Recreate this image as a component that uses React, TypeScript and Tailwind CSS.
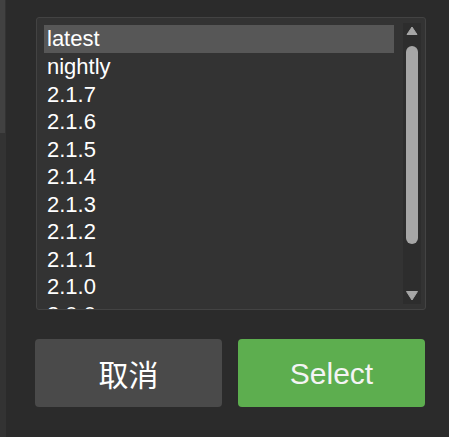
import React from "react";

const versions = [
  "latest",
  "nightly",
  "2.1.7",
  "2.1.6",
  "2.1.5",
  "2.1.4",
  "2.1.3",
  "2.1.2",
  "2.1.1",
  "2.1.0",
  "2.0.0",
];

export default function App() {
  const selected = "latest";

  return (
    <div
      className="w-[449px] h-[437px] bg-[#2b2b2b] flex text-white"
      style={{ fontFamily: '"Liberation Sans", Arial, "Noto Sans CJK SC", sans-serif' }}
    >
      {/* edge of the neighbouring panel */}
      <div className="w-[6px] flex flex-col border-r border-[#333333]">
        <div className="h-[133px] bg-[#414141]" />
        <div className="flex-1 bg-[#333333]" />
      </div>

      <div className="flex-1 flex flex-col">
        <div className="ml-[30px] mt-[17px] w-[390px] h-[293px] border border-[#434343] rounded-[3px] bg-[#333333] flex">
          <ul className="flex-1 overflow-hidden pt-[7px] pl-[7px] pr-[9px] text-[22px] leading-[27.5px]">
            {versions.map((v) => (
              <li
                key={v}
                className={
                  v === selected
                    ? "pl-[3px] bg-[#575757] h-[28px] leading-[28px]"
                    : "pl-[3px]"
                }
              >
                {v}
              </li>
            ))}
          </ul>

          {/* scrollbar */}
          <div className="w-[18px] mr-[4px] my-[5px] bg-[#2d2d2d] flex flex-col items-center">
            <svg width="12" height="10" viewBox="0 0 12 10" className="mt-[3px]">
              <path d="M6 1 L11 8.5 L1 8.5 Z" fill="#a6a6a6" stroke="#a6a6a6" strokeLinejoin="round" />
            </svg>
            <div className="mt-[10px] w-[12px] h-[198px] rounded-full bg-[#a6a6a6]" />
            <div className="flex-1" />
            <svg width="14" height="12" viewBox="0 0 14 12" className="mb-[2px]">
              <path d="M1.5 1.5 L12.5 1.5 L7 10 Z" fill="#a6a6a6" stroke="#a6a6a6" strokeLinejoin="round" />
            </svg>
          </div>
        </div>

        <div className="ml-[29px] mt-[29px] w-[390px] flex gap-[16px]">
          <button
            className="w-[187px] h-[68px] rounded-[4px] bg-[#4a4a4a] text-[30px] text-white"
            style={{ fontFamily: '"Noto Sans CJK SC", "Liberation Sans", sans-serif' }}
          >
            取消
          </button>
          <button className="w-[187px] h-[68px] rounded-[4px] bg-[#5dae4f] text-[30px] text-[#f4f4f4]">
            Select
          </button>
        </div>
      </div>
    </div>
  );
}
